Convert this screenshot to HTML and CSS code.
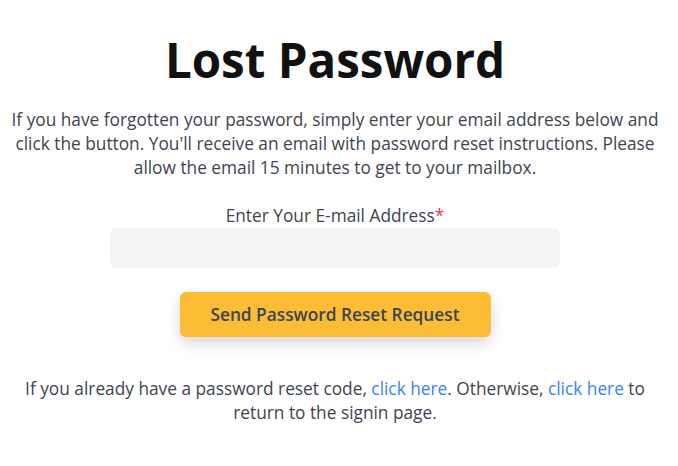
FILE: index.html
```html
<!DOCTYPE html>
<html lang="en">
<head>
<meta charset="utf-8">
<title>Lost Password</title>
<link rel="stylesheet" href="styles.css">
</head>
<body>
<main class="page">
  <h1 class="title">Lost Password</h1>
  <p class="intro">If you have forgotten your password, simply enter your email address below and click the button. You'll receive an email with password reset instructions. Please allow the email 15 minutes to get to your mailbox.</p>
  <form class="form">
    <label class="label" for="email">Enter Your E-mail Address<span class="req">*</span></label>
    <input class="input" id="email" type="email">
    <button class="btn" type="button">Send Password Reset Request</button>
  </form>
  <p class="footer">If you already have a password reset code, <a href="#" class="link">click here</a>. Otherwise, <a href="#" class="link">click here</a> to return to the signin page.</p>
</main>
</body>
</html>
```
FILE: styles.css
```css
* { box-sizing: border-box; }
body {
  margin: 0;
  background: #fff;
  font-family: "Open Sans", "Noto Sans", sans-serif;
  color: #3f4450;
}
.page {
  display: flex;
  flex-direction: column;
  align-items: center;
  padding: 28px 16px 0 8px;
  text-align: center;
}
.title {
  margin: 0;
  font-size: 47.5px;
  line-height: 64px;
  font-weight: 700;
  color: #111111;
}
.intro {
  margin: 16px 0 0;
  max-width: 652px;
  font-size: 17.3px;
  line-height: 24px;
}
.form {
  display: flex;
  flex-direction: column;
  align-items: center;
  margin-top: 24px;
}
.label {
  font-size: 17.3px;
  line-height: 24px;
}
.req { color: #e0414f; }
.input {
  width: 450px;
  height: 40px;
  border: none;
  border-radius: 6px;
  background: #f3f4f6;
  outline: none;
}
.btn {
  margin-top: 24px;
  width: 311px;
  height: 45px;
  border: none;
  border-radius: 6px;
  background: #fbbd35;
  color: #3f4450;
  font-family: inherit;
  font-size: 17.3px;
  font-weight: 600;
  box-shadow: 0 6px 14px rgba(0,0,0,0.16);
}
.footer {
  margin: 40px 0 0;
  max-width: 640px;
  font-size: 17.3px;
  line-height: 24px;
}
.link { color: #3b82f6; text-decoration: none; }
```
